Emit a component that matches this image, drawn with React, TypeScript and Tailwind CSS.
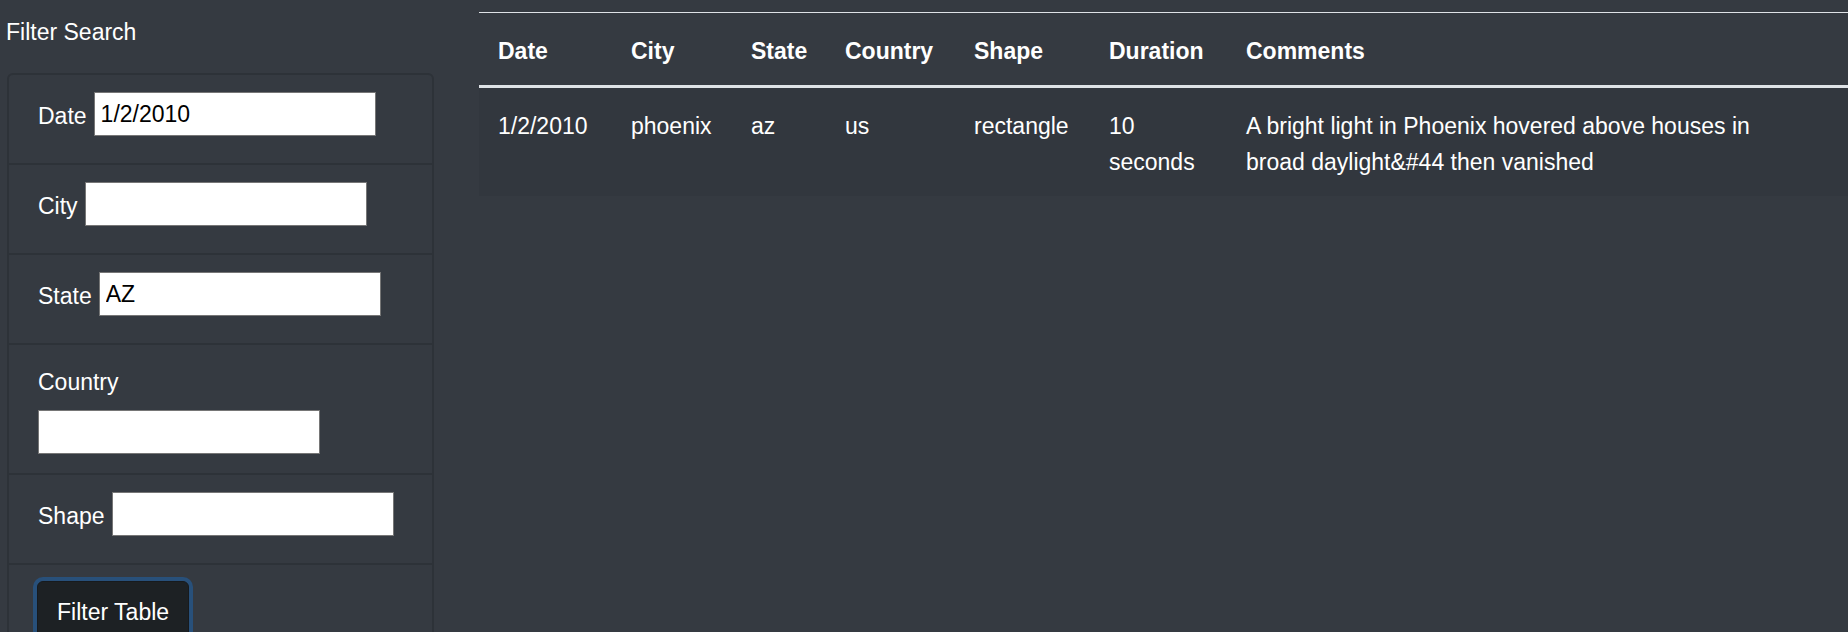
import { useState } from "react";

type Sighting = {
  datetime: string;
  city: string;
  state: string;
  country: string;
  shape: string;
  duration: string;
  comments: string;
};

const sightings: Sighting[] = [
  {
    datetime: "1/2/2010",
    city: "phoenix",
    state: "az",
    country: "us",
    shape: "rectangle",
    duration: "10 seconds",
    comments: "A bright light in Phoenix hovered above houses in broad daylight&#44 then vanished",
  },
];

const columns = ["Date", "City", "State", "Country", "Shape", "Duration", "Comments"];

const inputClass =
  "w-[282px] h-[44px] shrink-0 border border-[#767676] bg-white pl-[6px] text-[23px] leading-[36px] text-black outline-none";

function InlineField({
  label,
  value,
  onChange,
}: {
  label: string;
  value: string;
  onChange: (v: string) => void;
}) {
  return (
    <div className="flex h-[52px] items-start gap-[7px]">
      <label className="mt-[6px] leading-[36px]">{label}</label>
      <input className={inputClass} value={value} onChange={(e) => onChange(e.target.value)} />
    </div>
  );
}

export default function App() {
  const [date, setDate] = useState("1/2/2010");
  const [city, setCity] = useState("");
  const [state, setState] = useState("AZ");
  const [country, setCountry] = useState("");
  const [shape, setShape] = useState("");

  return (
    <div className="flex min-h-screen bg-[#353a41] font-['Liberation_Sans',Arial,sans-serif] text-[23px] text-white">
      <aside className="w-[479px] shrink-0 pl-[7px] pt-[14px]">
        <h5 className="-ml-[1px] leading-[36px]">Filter Search</h5>
        <div className="mt-[23px] w-[427px] rounded-[6px] border-2 border-[#2d3238]">
          <ul>
            <li className="border-b-2 border-[#2d3238] px-[29px] pt-[17px] pb-[19px]">
              <InlineField label="Date" value={date} onChange={setDate} />
            </li>
            <li className="border-b-2 border-[#2d3238] px-[29px] pt-[17px] pb-[19px]">
              <InlineField label="City" value={city} onChange={setCity} />
            </li>
            <li className="border-b-2 border-[#2d3238] px-[29px] pt-[17px] pb-[19px]">
              <InlineField label="State" value={state} onChange={setState} />
            </li>
            <li className="border-b-2 border-[#2d3238] px-[29px] pt-[17px] pb-[19px]">
              <label className="mt-[2px] block leading-[36px]">Country</label>
              <input
                className={inputClass + " mt-[10px] block"}
                value={country}
                onChange={(e) => setCountry(e.target.value)}
              />
            </li>
            <li className="border-b-2 border-[#2d3238] px-[29px] pt-[17px] pb-[19px]">
              <InlineField label="Shape" value={shape} onChange={setShape} />
            </li>
            <li className="px-[29px] pt-[16px] pb-[19px]">
              <button
                type="button"
                className="-ml-[1px] rounded-[6px] border border-[#171a1d] bg-[#1d2124] px-[19px] pt-[12px] pb-[9px] leading-[36px] text-white ring-4 ring-[#28507a]"
              >
                Filter Table
              </button>
            </li>
          </ul>
        </div>
      </aside>

      <main className="min-w-0 flex-1 pt-[12px]">
        <table className="w-full table-fixed border-collapse border-t border-[#dee2e6] text-left">
          <colgroup>
            <col className="w-[134px]" />
            <col className="w-[120px]" />
            <col className="w-[94px]" />
            <col className="w-[129px]" />
            <col className="w-[135px]" />
            <col className="w-[137px]" />
            <col />
          </colgroup>
          <thead>
            <tr className="border-b-[3px] border-[#dee2e6]">
              {columns.map((col, i) => (
                <th
                  key={col}
                  className={
                    (i === 0 ? "pl-[19px] " : "pl-[18px] ") +
                    "pr-[18px] pt-[20px] pb-[16px] align-top font-bold leading-[36px]"
                  }
                >
                  {col}
                </th>
              ))}
            </tr>
          </thead>
          <tbody>
            {sightings.map((s, idx) => (
              <tr key={idx} className="bg-[#32373e]">
                <td className="pl-[19px] pr-[18px] pt-[20px] pb-[16px] align-top leading-[36px]">{s.datetime}</td>
                <td className="pl-[18px] pr-[18px] pt-[20px] pb-[16px] align-top leading-[36px]">{s.city}</td>
                <td className="pl-[18px] pr-[18px] pt-[20px] pb-[16px] align-top leading-[36px]">{s.state}</td>
                <td className="pl-[18px] pr-[18px] pt-[20px] pb-[16px] align-top leading-[36px]">{s.country}</td>
                <td className="pl-[18px] pr-[18px] pt-[20px] pb-[16px] align-top leading-[36px]">{s.shape}</td>
                <td className="pl-[18px] pr-[18px] pt-[20px] pb-[16px] align-top leading-[36px]">{s.duration}</td>
                <td className="pl-[18px] pr-[62px] pt-[20px] pb-[16px] align-top leading-[36px]">{s.comments}</td>
              </tr>
            ))}
          </tbody>
        </table>
      </main>
    </div>
  );
}
